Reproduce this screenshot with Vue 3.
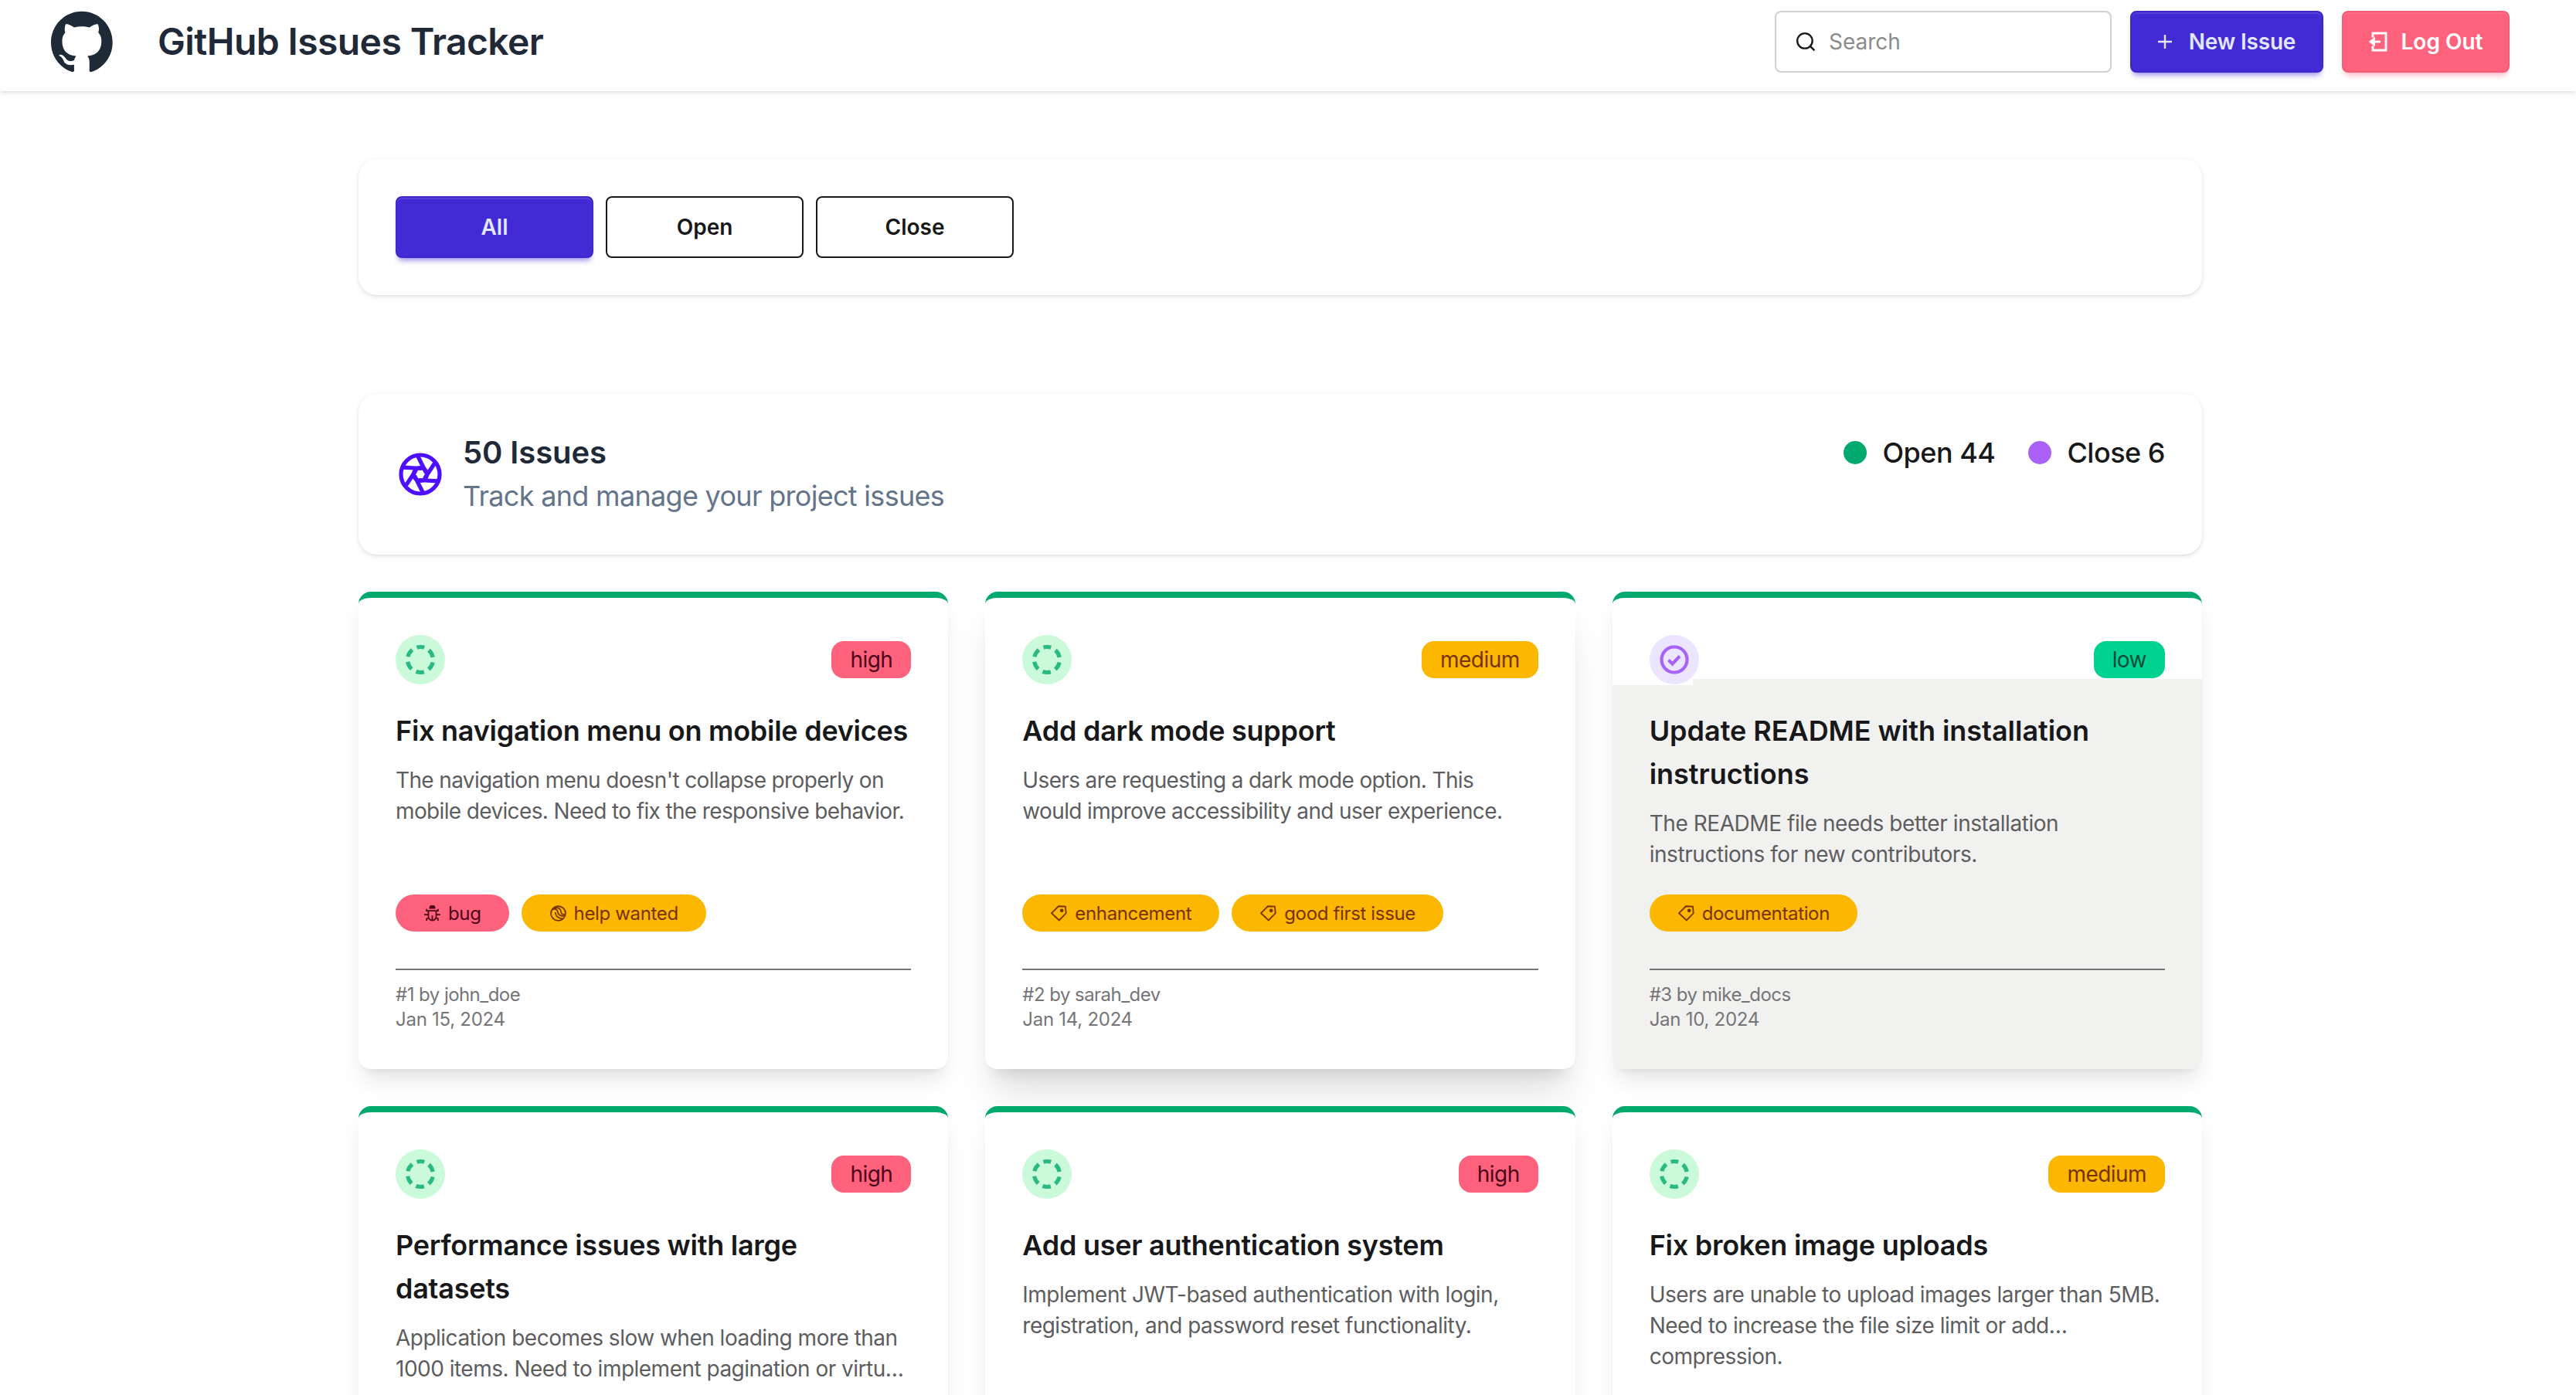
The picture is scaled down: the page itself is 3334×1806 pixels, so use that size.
<template>
  <div class="page">
    <header class="navbar">
      <div class="brand">
        <svg class="logo" viewBox="0 0 98 96">
          <path fill-rule="evenodd" clip-rule="evenodd" d="M48.854 0C21.839 0 0 22 0 49.217c0 21.756 13.993 40.172 33.405 46.69 2.427.49 3.316-1.059 3.316-2.362 0-1.141-.08-5.052-.08-9.127-13.59 2.934-16.42-5.867-16.42-5.867-2.184-5.704-5.42-7.17-5.42-7.17-4.448-3.015.324-3.015.324-3.015 4.934.326 7.523 5.052 7.523 5.052 4.367 7.496 11.404 5.378 14.235 4.074.404-3.178 1.699-5.378 3.074-6.6-10.839-1.141-22.243-5.378-22.243-24.283 0-5.378 1.94-9.778 5.014-13.2-.485-1.222-2.184-6.275.486-13.038 0 0 4.125-1.304 13.426 5.052a46.97 46.97 0 0 1 12.214-1.63c4.125 0 8.33.571 12.213 1.63 9.302-6.356 13.427-5.052 13.427-5.052 2.67 6.763.97 11.816.485 13.038 3.155 3.422 5.015 7.822 5.015 13.2 0 18.905-11.404 23.06-22.324 24.283 1.78 1.548 3.316 4.481 3.316 9.126 0 6.6-.08 11.897-.08 13.526 0 1.304.89 2.853 3.316 2.364 19.412-6.52 33.405-24.935 33.405-46.691C97.707 22 75.788 0 48.854 0z" />
        </svg>
        <h1 class="brand-title">GitHub Issues Tracker</h1>
      </div>
      <div class="actions">
        <label class="search">
          <svg class="search-icon" viewBox="0 0 24 24">
            <circle cx="11" cy="11" r="9" />
            <path d="m22.500 22.500-5-5" />
          </svg>
          <span>Search</span>
        </label>
        <button class="btn btn-primary btn-new">
          <svg class="plus-icon" viewBox="0 0 18 18">
            <path d="M9 0v18M0 9h18" />
          </svg>
          <span>New Issue</span>
        </button>
        <button class="btn btn-error btn-logout">
          <svg class="logout-icon" viewBox="0 0 24 26">
            <path d="M5 7.500V2h17v22H5v-5.500" />
            <path d="M15 13H3" />
            <path class="solid" d="M6.500 9.500v7L2 13z" />
          </svg>
          <span>Log Out</span>
        </button>
      </div>
    </header>

    <main class="content">
      <section class="panel filters">
        <button
          v-for="filter in filters"
          :key="filter"
          class="btn filter"
          :class="filter === active ? 'btn-primary' : 'btn-outline'"
          @click="active = filter"
        >
          {{ filter }}
        </button>
      </section>

      <section class="panel summary">
        <svg class="aperture" viewBox="0 0 64 64">
          <circle cx="32" cy="32" r="25" />
          <path v-for="n in 6" :key="n" :transform="`rotate(${n * 60} 32 32)`" d="M28.500 8 39.500 30" />
          <circle cx="32" cy="32" r="8.500" />
        </svg>
        <div class="summary-text">
          <h2>50 Issues</h2>
          <p>Track and manage your project issues</p>
        </div>
        <div class="legend">
          <span class="legend-item"><i class="dot dot-open"></i>Open 44</span>
          <span class="legend-item"><i class="dot dot-close"></i>Close 6</span>
        </div>
      </section>

      <section class="grid">
        <article
          v-for="issue in issues"
          :key="issue.id"
          class="card"
          :class="{ raised: issue.raised, shaded: issue.status === 'closed' }"
        >
          <div class="card-top">
            <svg v-if="issue.status === 'open'" class="status" viewBox="0 0 64 64">
              <circle cx="32" cy="32" r="32" fill="#cbfadb" />
              <circle class="status-dash" cx="32" cy="32" r="16.500" />
            </svg>
            <svg v-else class="status" viewBox="0 0 64 64">
              <circle cx="32" cy="32" r="32" fill="#ebe5ff" />
              <circle class="status-done" cx="32" cy="32" r="16.500" />
              <path class="status-done" d="m24.500 32.500 5 5 9.500-10" />
            </svg>
            <span class="priority" :class="issue.priority">{{ issue.priority }}</span>
          </div>
          <h3 class="card-title"><span v-for="line in issue.title" :key="line">{{ line }}</span></h3>
          <p class="card-text"><span v-for="line in issue.text" :key="line">{{ line }}</span></p>
          <div v-if="issue.tags" class="tags">
            <span v-for="tag in issue.tags" :key="tag" class="tag" :class="{ bug: tag === 'bug' }">
              <svg v-if="tag === 'bug'" class="tag-icon" viewBox="0 0 20 20">
                <path class="solid" d="M7 3.500a3 3 0 0 1 6 0z" />
                <path d="M3 4.500v2.300h14V4.500M5.200 6.800v7a4.800 4.800 0 0 0 9.600 0v-7M0 11.500h5.200M14.800 11.500H20M5.500 15.500 3 16.500V19M14.500 15.500l2.500 1V19M10 12.500v6" />
              </svg>
              <svg v-else-if="tag === 'help wanted'" class="tag-icon" viewBox="0 0 20 20">
                <circle cx="10" cy="10" r="9" />
                <path d="M2.500 5.500C6 3.500 9 5 9.500 8.500s3.500 5.500 8 4.500M6.500 8.500c0 4 3 7.500 8.500 8M5.500 3.500C10 2 13 4.500 13.500 8s1.500 3.500 4.500 3" />
              </svg>
              <svg v-else class="tag-icon" viewBox="0 0 20 20">
                <path d="M9.500 1.200 18 1.500l.8 8.300-8.500 8.700L1 9.700z" />
                <circle class="solid" cx="13.500" cy="6.500" r="1.400" />
              </svg>
              <span>{{ tag }}</span>
            </span>
          </div>
          <div v-if="issue.author" class="meta">
            <p class="author">#{{ issue.id }} by {{ issue.author }}</p>
            <p class="date">{{ issue.date }}</p>
          </div>
        </article>
      </section>
    </main>
  </div>
</template>

<script setup>
import { ref } from 'vue';

const filters = ['All', 'Open', 'Close'];
const active = ref('All');

const issues = [
  {
    id: 1,
    status: 'open',
    priority: 'high',
    title: ['Fix navigation menu on mobile devices'],
    text: ["The navigation menu doesn't collapse properly on", 'mobile devices. Need to fix the responsive behavior.'],
    tags: ['bug', 'help wanted'],
    author: 'john_doe',
    date: 'Jan 15, 2024',
  },
  {
    id: 2,
    status: 'open',
    priority: 'medium',
    raised: true,
    title: ['Add dark mode support'],
    text: ['Users are requesting a dark mode option. This', 'would improve accessibility and user experience.'],
    tags: ['enhancement', 'good first issue'],
    author: 'sarah_dev',
    date: 'Jan 14, 2024',
  },
  {
    id: 3,
    status: 'closed',
    priority: 'low',
    title: ['Update README with installation', 'instructions'],
    text: ['The README file needs better installation', 'instructions for new contributors.'],
    tags: ['documentation'],
    author: 'mike_docs',
    date: 'Jan 10, 2024',
  },
  {
    id: 4,
    status: 'open',
    priority: 'high',
    title: ['Performance issues with large', 'datasets'],
    text: ['Application becomes slow when loading more than', '1000 items. Need to implement pagination or virtu…'],
  },
  {
    id: 5,
    status: 'open',
    priority: 'high',
    title: ['Add user authentication system'],
    text: ['Implement JWT-based authentication with login,', 'registration, and password reset functionality.'],
  },
  {
    id: 6,
    status: 'open',
    priority: 'medium',
    title: ['Fix broken image uploads'],
    text: ['Users are unable to upload images larger than 5MB.', 'Need to increase the file size limit or add…', 'compression.'],
  },
];
</script>

<style>
body {
  overflow: hidden;
}
</style>

<style scoped>
.page {
  height: 1806px;
  overflow: hidden;
  background: #fff;
  color: #18181b;
  font-family: Inter, "Liberation Sans", sans-serif;
}

h1,
h2,
h3,
p {
  margin: 0;
}

svg {
  display: block;
  flex-shrink: 0;
  fill: none;
  stroke: currentColor;
}

.navbar {
  display: flex;
  justify-content: space-between;
  box-sizing: border-box;
  height: 118px;
  padding: 14px 86px 24px 66px;
  box-shadow: 0 2px 6px rgba(0, 0, 0, 0.1), 0 2px 4px -2px rgba(0, 0, 0, 0.1);
}

.brand {
  display: flex;
  align-items: center;
  gap: 58px;
  color: #1f2937;
}

.logo {
  width: 80px;
  height: 80px;
  fill: #1f2a37;
  stroke: none;
}

.brand-title {
  font-size: 48px;
  line-height: 64px;
  font-weight: 600;
  letter-spacing: -0.6px;
  white-space: nowrap;
}

.actions {
  display: flex;
  gap: 24px;
}

.search {
  display: flex;
  align-items: center;
  gap: 17px;
  box-sizing: border-box;
  width: 436px;
  height: 80px;
  padding: 0 25px;
  border: 2px solid #d1d1d1;
  border-radius: 8px;
  color: #8b8b8d;
  font-size: 28px;
}

.search-icon {
  width: 26px;
  height: 26px;
  color: #18181b;
  stroke-width: 2.2;
}

.btn {
  display: flex;
  align-items: center;
  justify-content: center;
  box-sizing: border-box;
  height: 80px;
  padding: 0;
  border: 2px solid #18181b;
  border-radius: 8px;
  background: #fff;
  color: #18181b;
  font-family: inherit;
  font-size: 28px;
  font-weight: 600;
  white-space: nowrap;
}

.btn-primary {
  border-color: #3d27c9;
  background: #422ad5;
  color: #e0e7ff;
  box-shadow: inset 0 2px 0 rgba(255, 255, 255, 0.1), 0 6px 6px -4px rgba(66, 42, 213, 0.45), 0 8px 8px -4px rgba(66, 42, 213, 0.2);
}

.btn-error {
  border-color: #f25c77;
  background: #ff627d;
  color: #fff;
  box-shadow: inset 0 2px 0 rgba(255, 255, 255, 0.08), 0 6px 6px -4px rgba(255, 98, 125, 0.4), 0 8px 8px -4px rgba(255, 98, 125, 0.2);
}

.btn-new {
  gap: 22px;
  width: 250px;
  letter-spacing: -0.2px;
}

.btn-logout {
  gap: 18px;
  width: 217px;
}

.plus-icon {
  width: 18px;
  height: 18px;
  stroke-width: 2.4;
}

.logout-icon {
  width: 24px;
  height: 26px;
  stroke-width: 2.8;
}

.content {
  width: 2386px;
  margin-left: 464px;
  padding-top: 88px;
}

.panel {
  display: flex;
  box-sizing: border-box;
  padding: 48px;
  border-radius: 24px;
  background: #fff;
  box-shadow: 0 2px 6px rgba(0, 0, 0, 0.1), 0 2px 4px -2px rgba(0, 0, 0, 0.1);
}

.filters {
  gap: 16px;
  height: 176px;
}

.filter {
  width: 256px;
}

.summary {
  height: 208px;
  margin-top: 128px;
}

.aperture {
  width: 64px;
  height: 64px;
  margin: 24px 23px 0 0;
  color: #4f0fff;
  stroke-width: 5.2;
}

.summary-text {
  flex: 1;
}

.summary-text h2 {
  font-size: 40px;
  line-height: 56px;
  font-weight: 600;
  letter-spacing: -0.1px;
  color: #1f2937;
}

.summary-text p {
  font-size: 36px;
  line-height: 56px;
  letter-spacing: -0.7px;
  color: #64748b;
}

.legend {
  display: flex;
  gap: 43px;
  height: 56px;
}

.legend-item {
  display: flex;
  align-items: center;
  gap: 20px;
  font-size: 36px;
  font-weight: 500;
  letter-spacing: -0.5px;
  white-space: nowrap;
}

.dot {
  width: 30px;
  height: 30px;
  border-radius: 50%;
}

.dot-open {
  background: #00a96e;
}

.dot-close {
  background: #a961f8;
}

.grid {
  display: grid;
  grid-template-columns: repeat(3, minmax(0, 1fr));
  gap: 48px;
  margin-top: 48px;
}

.card {
  display: flex;
  flex-direction: column;
  box-sizing: border-box;
  height: 618px;
  padding: 48px;
  border-top: 8px solid #00a96e;
  border-radius: 16px;
  background: #fff;
  box-shadow: 0 20px 30px -6px rgba(0, 0, 0, 0.1), 0 8px 12px -8px rgba(0, 0, 0, 0.1);
}

.raised {
  box-shadow: 0 40px 50px -10px rgba(0, 0, 0, 0.12), 0 16px 20px -12px rgba(0, 0, 0, 0.12);
}

/* the grey tint begins just under the status row, a little lower on the icon side */
.shaded {
  background:
    linear-gradient(#fff, #fff) 0 0 / 104px 113px no-repeat,
    linear-gradient(#fff 105px, #f1f1ef 105px);
}

.card-top {
  display: flex;
  align-items: center;
  justify-content: space-between;
  height: 64px;
}

.status {
  width: 64px;
  height: 64px;
  stroke: none;
}

.status-dash {
  stroke: #2ab982;
  stroke-width: 5.2;
  stroke-dasharray: 10.6 6.68;
  stroke-dashoffset: 5.3;
  transform: rotate(-90deg);
  transform-origin: center;
}

.status-done {
  stroke: #a763f7;
  stroke-width: 4.2;
}

.priority {
  padding: 0 24px;
  border-radius: 16px;
  font-size: 28px;
  line-height: 48px;
  letter-spacing: -0.55px;
}

.high {
  background: #ff627d;
  color: #4d0218;
}

.medium {
  background: #fcb700;
  color: #793205;
}

.low {
  background: #00d390;
  color: #004c39;
}

.card-title {
  display: flex;
  flex-direction: column;
  margin-top: 32px;
  font-size: 36px;
  line-height: 56px;
  font-weight: 600;
  letter-spacing: -0.26px;
  white-space: nowrap;
}

.shaded .card-title {
  letter-spacing: -0.03px;
}

.card-text {
  display: flex;
  flex-direction: column;
  margin-top: 16px;
  font-size: 28px;
  line-height: 40px;
  letter-spacing: -0.51px;
  color: #5d5d5f;
  white-space: nowrap;
}

.card:nth-child(-n + 2) .card-text {
  letter-spacing: -0.64px;
}

.shaded .card-text {
  letter-spacing: -0.44px;
}

.tags {
  display: flex;
  gap: 16px;
  margin-top: auto;
}

.tag {
  display: flex;
  align-items: center;
  gap: 10px;
  height: 48px;
  padding: 0 36px 0 37px;
  border-radius: 24px;
  background: #fcb700;
  color: #793205;
  font-size: 24px;
  letter-spacing: -0.35px;
  white-space: nowrap;
}

.bug {
  background: #ff627d;
  color: #4d0218;
}

.tag-icon {
  width: 21px;
  height: 21px;
  stroke-width: 1.7;
}

.solid {
  fill: currentColor;
}

.meta {
  margin-top: 48px;
  padding-top: 16px;
  border-top: 2px solid #757577;
  font-size: 24px;
  line-height: 32px;
  color: #757577;
}

.author {
  letter-spacing: -0.55px;
}

.date {
  letter-spacing: -0.27px;
}
</style>
